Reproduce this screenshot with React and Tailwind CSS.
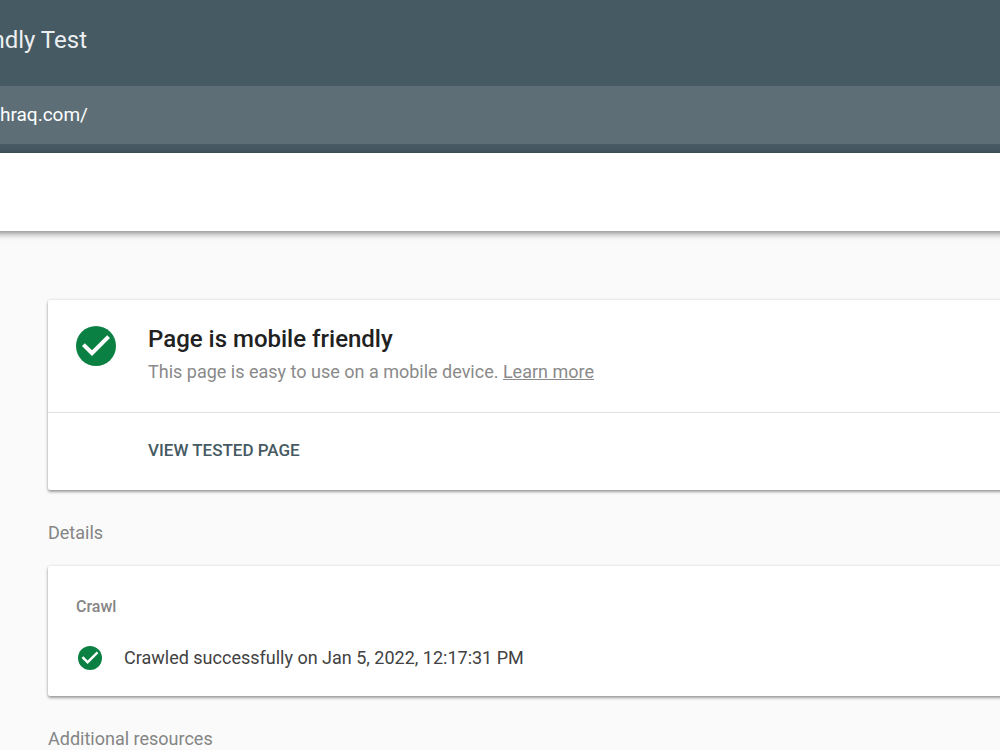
import React, { useState } from 'react';

const CheckCircle = ({ className }) => (
    <svg viewBox="2 2 20 20" className={className} aria-hidden="true">
        <circle cx="12" cy="12" r="10" fill="#0b8043" />
        <path d="M10 17l-5-5 1.41-1.41L10 14.17l7.59-7.59L19 8l-9 9z" fill="#fff" />
    </svg>
);

const Card = ({ children }) => (
    <section className="-mr-2 rounded-xs bg-white shadow-[0_2px_3px_rgba(0,0,0,0.35),0_0_3px_rgba(0,0,0,0.14)]">
        {children}
    </section>
);

const App = () => {
    const [url, setUrl] = useState('hraq.com/');

    return (
        <div className="min-h-screen overflow-hidden bg-[#fafafa] font-[Roboto,sans-serif] text-lg leading-6">
            <header className="bg-[#455a62] pb-[9px]">
                <div className="flex h-[86px] items-center pb-1.5">
                    <h1 className="flex w-[87px] justify-end overflow-hidden text-2xl leading-8 whitespace-nowrap text-[#eceff1]">
                        ndly Test
                    </h1>
                </div>
                <input
                    type="text"
                    aria-label="URL"
                    value={url}
                    onChange={(e) => setUrl(e.target.value)}
                    className="block h-[58px] w-full bg-[#5e6e77] pb-0.5 text-[19px] text-white outline-none"
                />
            </header>
            <div className="-mx-2 h-[78px] bg-white shadow-[0_2px_7px_rgba(0,0,0,0.5)]"></div>

            <main className="pt-[69px] pl-12">
                <Card>
                    <div className="flex h-[113px] gap-8 border-b border-[#e0e0e0] px-7 pt-[23px]">
                        <CheckCircle className="mt-[3px] size-10 shrink-0" />
                        <div>
                            <h2 className="text-2xl leading-8 font-medium text-[#212121]">Page is mobile friendly</h2>
                            <p className="mt-[5px] text-[#8a8a8a]">
                                This page is easy to use on a mobile device.{' '}
                                <a href="#learn-more" className="underline">Learn more</a>
                            </p>
                        </div>
                    </div>
                    <div className="flex h-[77px] items-center pb-1 pl-[100px]">
                        <button type="button" className="text-[17px] font-medium text-[#455a62]">VIEW TESTED PAGE</button>
                    </div>
                </Card>

                <h3 className="mt-[31px] mb-[21px] text-[#858585]">Details</h3>
                <Card>
                    <div className="px-7 pt-[29px] pb-[26px]">
                        <h4 className="text-base leading-6 font-medium text-[#858585]">Crawl</h4>
                        <div className="mt-[27px] flex items-center gap-[22px]">
                            <CheckCircle className="ml-0.5 size-6 shrink-0" />
                            <p className="text-[#424242]">Crawled successfully on Jan 5, 2022, 12:17:31 PM</p>
                        </div>
                    </div>
                </Card>

                <h3 className="mt-[31px] text-[#858585]">Additional resources</h3>
            </main>
        </div>
    );
};

export default App;
